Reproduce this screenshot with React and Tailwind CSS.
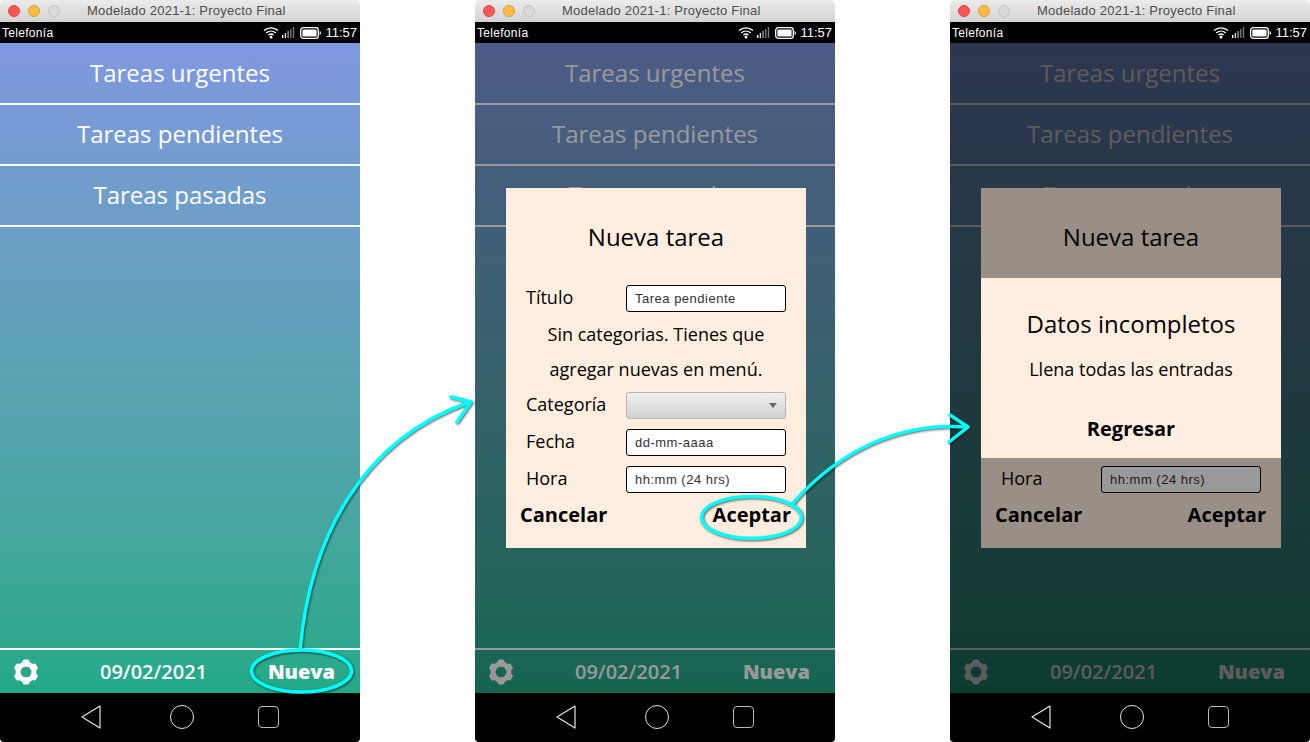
import React from "react";

const OPEN = "font-['Open_Sans',sans-serif]";
const ARIAL = "font-['Liberation_Sans',Arial,sans-serif]";

/* ---------- ICONS ---------- */

function Gear() {
   const teeth = [0, 60, 120, 180, 240, 300];
   return (
      <svg viewBox="0 0 26 26" className="w-[26px] h-[26px] text-white" fill="currentColor">
         {teeth.map((deg) => (
            <rect key={deg} x="9.5" y="0.6" width="7" height="7" rx="2" transform={`rotate(${deg} 13 13)`} />
         ))}
         <circle cx="13" cy="13" r="8" fill="none" stroke="currentColor" strokeWidth="5" />
      </svg>
   );
}

function Wifi() {
   return (
      <svg viewBox="0 0 16 13" className="w-4 h-[13px]" fill="none" stroke="white" strokeWidth="1.3">
         <path d="M1 4.6C5 .9 11 .9 15 4.6" />
         <path d="M3.2 6.9C6 4.4 10 4.4 12.8 6.9" />
         <path d="M5.4 9.1C7 7.8 9 7.8 10.6 9.1" />
         <circle cx="8" cy="11" r="1.5" fill="white" stroke="none" />
      </svg>
   );
}

function Signal() {
   return (
      <svg viewBox="0 0 13 11" className="w-[13px] h-[11px]">
         <rect x="0" y="8" width="1.4" height="3" fill="#fff" />
         <rect x="2.7" y="6" width="1.4" height="5" fill="#ddd" />
         <rect x="5.4" y="4" width="1.4" height="7" fill="#999" />
         <rect x="8.1" y="2" width="1.4" height="9" fill="#777" />
         <rect x="10.8" y="0" width="1.4" height="11" fill="#777" />
      </svg>
   );
}

function Battery() {
   return (
      <svg viewBox="0 0 21 12" className="w-[21px] h-3" fill="none">
         <rect x="0.7" y="0.7" width="17.6" height="10.6" rx="2.6" stroke="white" strokeWidth="1.3" />
         <rect x="2.4" y="2.4" width="14.2" height="7.2" rx="1.2" fill="white" />
         <path d="M19.6 4v4c.9-.3 1.3-1 1.3-2s-.4-1.7-1.3-2z" fill="white" />
      </svg>
   );
}

function NavBar() {
   return (
      <div className="h-[49px] bg-black rounded-b-[4px] flex items-center pl-[81px]">
         <svg viewBox="0 0 20 24" className="w-5 h-6 -mt-[2px]" fill="none" stroke="#e5e5e5" strokeWidth="1.2" strokeLinejoin="round">
            <path d="M19 1 1 12l18 11z" />
         </svg>
         <div className="ml-[69px] w-6 h-6 rounded-full border-[1.5px] border-[#e5e5e5] -mt-[2px]" />
         <div className="ml-[64px] w-[21px] h-[22px] rounded-[4px] border-[1.5px] border-[#bbb] -mt-[2px]" />
      </div>
   );
}

/* ---------- WINDOW ---------- */

function Row({ children, first }) {
   return (
      <div className={`${first ? "h-[62px]" : "h-[61px] pb-[2px]"} border-b-2 border-white flex items-center justify-center text-white text-[24px] ${OPEN}`}>
         {children}
      </div>
   );
}

function Window({ children }) {
   return (
      <div className="w-[360px] h-[742px] shrink-0 flex flex-col">
         {/* Title bar */}
         <div className="h-[22px] rounded-t-[5px] bg-gradient-to-b from-[#ebebeb] to-[#d3d3d3] flex items-center pl-2 relative">
            <span className="w-3 h-3 rounded-full bg-[#fc5753] border border-[#df4744]" />
            <span className="w-3 h-3 rounded-full bg-[#fdbc40] border border-[#de9f34] ml-2" />
            <span className="w-3 h-3 rounded-full bg-[#d9d9d9] border border-[#c4c4c4] ml-2" />
            <span className={`ml-[27px] text-[13px] text-[#4d4d4d] tracking-[0.23px] ${ARIAL}`}>
               Modelado 2021-1: Proyecto Final
            </span>
         </div>

         {/* Status bar */}
         <div className={`h-[21px] bg-black text-white text-[12px] flex items-center pl-[2px] pr-[3px] ${ARIAL}`}>
            <span className="tracking-[0.3px]">Telefonía</span>
            <div className="ml-auto flex items-center">
               <Wifi />
               <div className="ml-[3px]"><Signal /></div>
               <div className="ml-[5px]"><Battery /></div>
               <span className="ml-[4px] text-[13px]">11:57</span>
            </div>
         </div>

         {/* App */}
         <div className="flex-1 relative flex flex-col bg-gradient-to-b from-[#8098e0] to-[#22a987]">
            <Row first>Tareas urgentes</Row>
            <Row>Tareas pendientes</Row>
            <Row>Tareas pasadas</Row>
            <div className="mt-auto h-[45px] border-t-2 border-white flex items-center text-white">
               <div className="ml-[13px]"><Gear /></div>
               <span className={`ml-[61px] text-[20px] font-semibold ${OPEN}`}>09/02/2021</span>
               <span className={`ml-auto mr-[25px] text-[20px] font-extrabold ${OPEN}`}>Nueva</span>
            </div>
            {children}
         </div>

         <NavBar />
      </div>
   );
}

/* ---------- MODALS ---------- */

function Field({ label, children }) {
   return (
      <div className={`h-[37px] flex items-center pl-5 text-[18px] text-black ${OPEN}`}>
         <span className="w-[100px] mb-[2px]">{label}</span>
         {children}
      </div>
   );
}

function TextBox({ value }) {
   return (
      <div className={`w-[160px] h-[27px] bg-white border border-black rounded-[3px] pl-2 flex items-center text-[13px] tracking-[0.5px] text-[#333] ${ARIAL}`}>
         {value}
      </div>
   );
}

function FormModal() {
   return (
      <div className="absolute left-[31px] top-[145px] w-[300px] h-[360px] bg-[#ffeedf] flex flex-col">
         <div className={`h-[92px] pt-[5px] flex items-center justify-center text-[24px] text-black ${OPEN}`}>Nueva tarea</div>
         <Field label="Título"><TextBox value="Tarea pendiente" /></Field>
         <div className={`text-center text-[18px] leading-[35px] text-black ${OPEN}`}>
            <div>Sin categorias. Tienes que</div>
            <div>agregar nuevas en menú.</div>
         </div>
         <Field label="Categoría">
            <div className="w-[160px] h-[27px] rounded-[3px] border border-[#b5b5b5] bg-gradient-to-b from-[#f0f0f0] to-[#d2d2d2] flex items-center justify-end pr-2">
               <div className="w-0 h-0 border-x-[4.5px] border-x-transparent border-t-[5px] border-t-[#666]" />
            </div>
         </Field>
         <Field label="Fecha"><TextBox value="dd-mm-aaaa" /></Field>
         <Field label="Hora"><TextBox value="hh:mm (24 hrs)" /></Field>
         <div className={`flex justify-between pl-[14px] pr-[15px] mt-[2px] text-[20px] font-bold text-black ${OPEN}`}>
            <span>Cancelar</span>
            <span>Aceptar</span>
         </div>
      </div>
   );
}

function AlertModal() {
   return (
      <div className={`absolute left-[31px] top-[235px] w-[300px] h-[180px] bg-[#ffeedf] flex flex-col items-center text-black ${OPEN}`}>
         <div className="mt-[29px] text-[24px] leading-[34px]">Datos incompletos</div>
         <div className="mt-[15px] text-[18px] leading-[26px]">Llena todas las entradas</div>
         <div className="mt-[33px] text-[20px] leading-[28px] font-bold">Regresar</div>
      </div>
   );
}

function Dim() {
   return <div className="absolute inset-0 bg-black/40" />;
}

/* ---------- ANNOTATIONS ---------- */

function Arrows() {
   return (
      <svg
         viewBox="0 0 1310 742"
         className="absolute inset-0 w-[1310px] h-[742px] pointer-events-none drop-shadow-[1px_1px_1px_rgba(0,0,0,0.6)]"
         fill="none"
         stroke="#00ffff"
         strokeWidth="3.5"
         strokeLinecap="round"
         strokeLinejoin="round"
      >
         <ellipse cx="301.5" cy="671" rx="50" ry="21" />
         <path d="M300 650C310 540 360 440 470 402" />
         <path d="M451 397l20 5-14 20" />
         <ellipse cx="751.5" cy="517.5" rx="50" ry="21" />
         <path d="M793 503C840 450 900 422 967 427" />
         <path d="M950 415l18 12-19 15" />
      </svg>
   );
}

export default function App() {
   return (
      <div className="relative w-[1310px] h-[742px] bg-white overflow-hidden flex gap-[115px]">
         <Window />
         <Window>
            <Dim />
            <FormModal />
         </Window>
         <Window>
            <Dim />
            <FormModal />
            <Dim />
            <AlertModal />
         </Window>
         <Arrows />
      </div>
   );
}
